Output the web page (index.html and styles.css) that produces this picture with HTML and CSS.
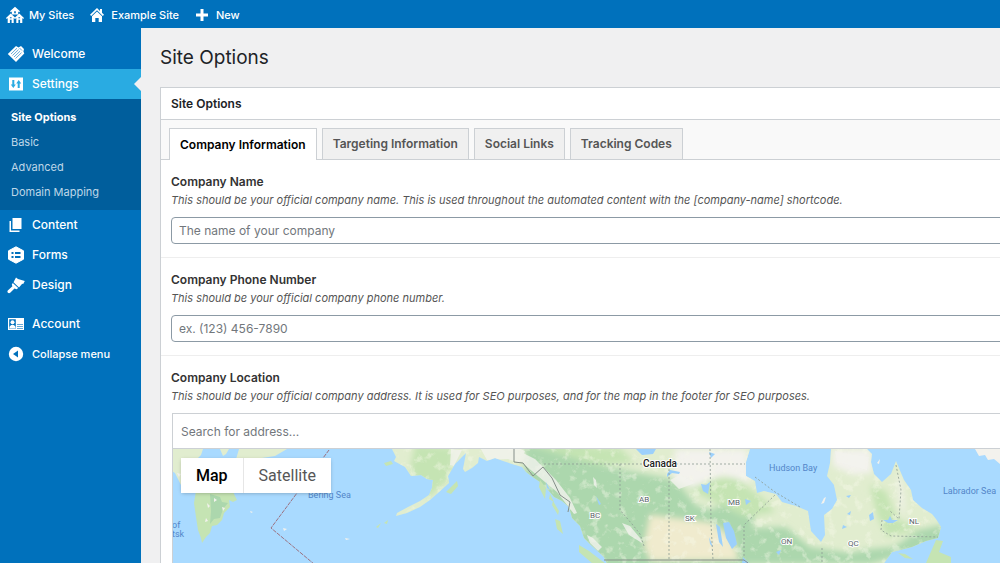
FILE: index.html
```html
<!DOCTYPE html>
<html lang="en">
<head>
<meta charset="utf-8">
<meta name="viewport" content="width=device-width, initial-scale=1">
<title>Site Options</title>
<link rel="stylesheet" href="styles.css">
</head>
<body>
<header class="topbar">
  <a class="topbar-link sites" href="#"><svg class="icon" viewBox="0 0 18 18"><path d="M9 .8 4 5.300l.8.9 1-.8V8.500h6.400V5.400l1 .8.800-.9zM4.700 7.500 0 12l.8.9.9-.8V17h6v-4.900l1.300 1 1.300-1V17h6v-4.900l.9.8.8-.9-4.700-4.500L9 11.500z"/><path class="hole" d="M8.200 5.300h1.600v2H8.200zM3.900 13.700h1.700V17H3.900zm8.500 0h1.700V17h-1.700zM3.900 11.200h1.700v1H3.900zm8.500 0h1.700v1h-1.700z"/></svg>My Sites</a>
  <a class="topbar-link site" href="#"><svg class="icon" viewBox="0 0 18 18"><path d="M9 2 2 8.700l1.200 1.200L9 4.300l5.800 5.600L16 8.700l-2-1.900V3h-2v1.900zM4 10.300l5-4.700 5 4.700V16h-3.300v-4H7.300v4H4z"/></svg>Example Site</a>
  <a class="topbar-link new" href="#"><svg class="icon" viewBox="0 0 18 18"><path d="M7.500 3h3v4.500H15v3h-4.500V15h-3v-4.500H3v-3h4.500z"/></svg>New</a>
</header>
<div class="layout">
  <nav class="sidebar" aria-label="Main menu">
    <a class="menu-link" href="#"><svg class="icon" viewBox="0 0 18 18"><path d="M.8 9 9 1l2.500 1.600L14 1l3 3-.6 2.500.9 2L9 17z"/><path class="cut" d="m4 9 6-5.800M5.500 10.500l6-5.800M7 12l6-5.800M8.500 13.500l6-5.800M12.500 3l2.500 2.500"/></svg>Welcome</a>
    <a class="menu-link current" href="#" aria-current="true"><svg class="icon" viewBox="0 0 18 18"><path d="M2 2.500h14v13H2z"/><path class="cut-current" d="M6.300 5v6m5.400-4v6"/><path class="hole-current" d="m3.800 9.600 2.500 3.500 2.500-3.500zM9.200 8.400l2.500-3.500 2.500 3.500z"/></svg>Settings</a>
    <div class="submenu">
      <a class="submenu-link selected" href="#">Site Options</a>
      <a class="submenu-link" href="#">Basic</a>
      <a class="submenu-link" href="#">Advanced</a>
      <a class="submenu-link" href="#">Domain Mapping</a>
    </div>
    <a class="menu-link" href="#"><svg class="icon" viewBox="0 0 18 18"><path d="M5.500 2h9v11h-9zM2.500 5H4v9.500h8.500V16h-10z"/></svg>Content</a>
    <a class="menu-link" href="#"><svg class="icon" viewBox="0 0 18 18"><path d="m9 .8 7.500 4v8.400L9 17.200l-7.500-4V4.800z" stroke="currentColor" stroke-linejoin="round"/><path class="cut-wide" d="M4.500 7h2m1.500 0h5.500m-9 4h2m1.500 0h5.500"/></svg>Forms</a>
    <a class="menu-link" href="#"><svg class="icon" viewBox="0 0 18 18"><path d="M9 1.500 11 3l6.800 2-1.600 3-1-.2-3.200 3.700L6.500 6.200zM5.800 6.900l5.400 5.200-1.600 1.100-2.100-.8-4.300 4.400c-1.600 1.200-3.700-.6-2.400-2.300l4.600-4.200-.6-1.800z"/></svg>Design</a>
    <div class="menu-gap"></div>
    <a class="menu-link" href="#"><svg class="icon" viewBox="0 0 18 18"><path fill-rule="evenodd" d="M1 3h16v12H1zM2.200 4.200v9.600h6.600V4.200z"/><circle cx="5.500" cy="7.200" r="2"/><path d="M2.300 13.500c0-5 6.400-5 6.400 0z"/><path class="hairline" d="M10 9.500h6m-6 2h6m-6 2h6"/></svg>Account</a>
    <button class="menu-link collapse" type="button"><svg class="icon" viewBox="0 0 18 18"><circle cx="9" cy="9" r="7.200"/><path class="hole" d="M11 5.500v7L6 9z"/></svg>Collapse menu</button>
  </nav>
  <main class="content">
    <h1 class="page-title">Site Options</h1>
    <section class="panel">
      <h2 class="panel-title">Site Options</h2>
      <div class="tabs" role="tablist">
        <button class="tab active" type="button" role="tab" aria-selected="true">Company Information</button>
        <button class="tab" type="button" role="tab" aria-selected="false">Targeting Information</button>
        <button class="tab" type="button" role="tab" aria-selected="false">Social Links</button>
        <button class="tab" type="button" role="tab" aria-selected="false">Tracking Codes</button>
      </div>
      <div class="field">
        <label class="label" for="name">Company Name</label>
        <p class="hint">This should be your official company name. This is used throughout the automated content with the [company-name] shortcode.</p>
        <input class="input" id="name" type="text" placeholder="The name of your company">
      </div>
      <div class="field">
        <label class="label" for="phone">Company Phone Number</label>
        <p class="hint">This should be your official company phone number.</p>
        <input class="input" id="phone" type="tel" placeholder="ex. (123) 456-7890">
      </div>
      <div class="field">
        <label class="label" for="address">Company Location</label>
        <p class="hint">This should be your official company address. It is used for SEO purposes, and for the map in the footer for SEO purposes.</p>
        <div class="location">
          <input class="search" id="address" type="text" placeholder="Search for address...">
          <div class="map">
            <svg class="map-canvas" role="img" aria-label="Map of Canada">
              <defs>
                <path id="mainland" d="M392 449L396 457 394 461 405 467 411 476 421 475 427 479 433 480 432 488 429 495 420 501 408 507 397 513 396 516 407 513 420 507 430 500 439 492 449 483 448 476 455 464 462 457 466 453 463 469 465 472 472 468 478 463 479 457 487 461 495 458 503 461 512 464 522 467 526 472 534 478 540 482 548 490 554 497 562 501 569 507 572 518 580 526 584 538 591 545 604 557 608 566H882L892 552 912 547 926 541 938 538 941 527 936 519 932 514 922 508 913 500 911 490 904 480 896 461 891 474 882 482 874 474 871 462 872 454 867 449H831L830 463 827 476 834 485 837 500 832 509 824 515 825 535 821 542 811 531 808 511 796 506 782 502 776 494 764 491 757 493 755 481 746 476V462L750 449Z"/>
                <clipPath id="land"><use href="#mainland"/></clipPath>
                <filter id="texture" x="0" y="0" width="100%" height="100%">
                  <feTurbulence type="fractalNoise" baseFrequency=".11" numOctaves="4" seed="8"/>
                  <feColorMatrix values="0 0 0 0 .93 0 0 0 0 .95 0 0 0 0 .82 5 0 0 0 -2.700"/>
                </filter>
                <filter id="soft"><feGaussianBlur stdDeviation="3"/></filter>
              </defs>
              <g transform="translate(-173 -449)">
                <path class="plain" d="M172 449h31l-2 6-5 5v25h-15l-6-12-3-2zM220 449h9l-3 5-3 2zM239 449h48l-12 7-13 2v15h-30z"/>
                <path class="grass" d="M197 485h34l3 9 3 6-4 2-4-2 1 7-6 6-2 7-5 5-5 1-2 7-4 4-4 6-1-5-3-8-2-13-2-14z"/>
                <path class="forest" d="M210 494l10 3 2 5 6 1-5 6-3 9-6 1-4 5 1-13z"/>
                <path class="snow" d="M207 503l3 3-2 2zM214 498l3 2-3 2zM206 518l2 3-3 1zM177 473l4 1-2 3zM222 507l3 1-2 3zM283 528l4 1-3 2zM345 538l5 1-4 1zM250 511l3 1-2 1z"/>
                <use href="#mainland" class="plain"/>
                <g clip-path="url(#land)">
                  <g filter="url(#soft)">
                    <path class="grass" d="M415 445l40 3-5 30-22 20-10-17-8-12z"/>
                    <path class="forest" d="M525 445h60l15 20 75 15 22 26 14 4 20-10 24 14-3 14-8 20 2 22H570l-46-73zM744 528l42-1 24 20 40 6 20-4 24-2 25-17 28-6-5 20-72 20H744z"/>
                    <path class="grass" d="M530 445l90 3 15 15-35 2-20-5zM670 480l65-2 30 22 10 12-30 5zM870 485l16 6 11 28 23 10-33 8-10-22z"/>
                    <path class="prairie" d="M650 515l62 8 20 15 7 22-88 1-7-15z"/>
                    <path class="snow" d="M675 449h72l4 34-28-8-30 13-20-8zM832 449h39l1 24-19 2-20-9zM897 475l4 3 3 22 1 20-5-16z"/>
                  </g>
                  <rect class="grain" x="392" y="449" width="560" height="114" filter="url(#texture)"/>
                  <path class="tundra" d="M478 444h30l17 7-5 12-12-4-21 1zM515 449l20 10 21 21 14 18 7 15-3 1-17-22-18-15-21-18zM451 449l11 1-8 16-4-1zM622 523l8 3 10 12 2 5-13-8zM593 477l3 3 1 8-3-3zM587 535l6 3 9 9-4 4-8-8zM670 480l10-5 15 8-16 6zM835 451l13 3 21 3-2 13-11-3-19-5z"/>
                </g>
                <path class="grass" d="M384 463l7-2 2 3-7 2zM449 489l8-8 1 5-7 8-5-2zM540 480l6 8-1 11-6-12zM550 494l4 8-5-3zM553 501l6 10-1 4-6-10zM555 519l5 2 3 13-6-5zM579 545l10 6 17 13h-13l-14-12zM384 523l4-3-1 4zM376 527l5-4-3 5zM936 540l7 1-4 11 12 5v6h-25zM898 553l7 1 8 5-8-1z"/>
                <path class="snow" d="M975 449h25v15l-6-5-6 1-3-5-6 1zM821 504l3-6 2-1-2 6zM877 463l3-4-1 5z"/>
                <path class="lake" d="M636 449h20l-3 5-11 1zM667 474l3-4 10 2-1 2-7-1-5 4zM701 484l5 1 4-3-2 12-5-3zM723 523l6-1 5 9 3 13-5 5-6-11zM716 524l4 3 3 20-4-5zM709 452l6 2-4 4zM869 515l4-3 1 7-4 2zM883 520l5 0 2-4 2 4 6 0-5 3-5 0zM847 514l4-3-1 4zM596 496l5 8-2 1zM843 525l4 2-5 2zM745 499l6 2-5 4zM776 552l5-2-2 5zM743 557l6 6h-7zM546 482l4 8-3-2zM709 537l4 10-3-3zM846 496l5-1-2 3z"/>
                <path class="border" d="M329 450l-58 78 43 36"/>
                <path class="country" d="M514 449v13l9 1 10 13 10-9 9 11 8 17 10 7-2 10M604 560h140l4 3"/>
                <path class="province" d="M544 464h201M620 464v46l12 14 8 10 4 12M669 465v95M710 449l1 75 2 36M744 556v-31l32-31M755 477l20 15 25 15M822 548v14M882 520l-1 10 10 6 47 1M896 465l5 25-2 29-9-8"/>
                <g class="water-label"><text x="308" y="498">Bering Sea</text><text x="769" y="471">Hudson Bay</text><text x="943" y="494">Labrador Sea</text><text x="172" y="528">of</text><text x="172" y="537">tsk</text></g>
                <text class="country-label" x="643" y="467">Canada</text>
                <g class="province-label"><text x="590" y="518">BC</text><text x="639" y="502">AB</text><text x="685" y="521">SK</text><text x="728" y="505">MB</text><text x="781" y="544">ON</text><text x="848" y="546">QC</text><text x="909" y="524">NL</text></g>
              </g>
            </svg>
            <div class="map-types">
              <button class="map-type chosen" type="button">Map</button>
              <button class="map-type" type="button">Satellite</button>
            </div>
          </div>
        </div>
      </div>
    </section>
  </main>
</div>
</body>
</html>
```
FILE: styles.css
```css
* { box-sizing: border-box; }
body {
  display: flex;
  flex-direction: column;
  height: 100vh;
  margin: 0;
  overflow: hidden;
  background: #f0f0f1;
  color: #3c434a;
  font: 12px/18px Inter, sans-serif;
}
h1, h2, p { margin: 0; }
button, input { font: inherit; }
button { cursor: pointer; }
a { color: inherit; text-decoration: none; }
.icon { flex: none; width: 18px; height: 18px; fill: currentColor; }
.icon .hole { fill: #0071bc; }
.icon .hole-current { fill: #29abe2; }
.icon .cut { fill: none; stroke: #0071bc; stroke-width: 1; opacity: .6; }
.icon .cut-wide { fill: none; stroke: #0071bc; stroke-width: 2; }
.icon .cut-current { fill: none; stroke: #29abe2; stroke-width: 2; }
.icon .hairline { fill: none; stroke: #0071bc; stroke-width: 1; opacity: .6; }

.topbar {
  display: flex;
  flex: none;
  gap: 14px;
  height: 28px;
  padding: 1px 6px 0;
  background: #0071bc;
  color: #fff;
  font-size: 11px;
  font-weight: 500;
}
.topbar-link { display: flex; align-items: center; gap: 5px; }
.layout { display: flex; flex: 1; min-height: 0; }
.sidebar {
  flex: none;
  width: 141px;
  padding-top: 11px;
  background: #0071bc;
  color: #fff;
}
.menu-link {
  position: relative;
  display: flex;
  align-items: center;
  gap: 7px;
  width: 100%;
  height: 30px;
  padding: 0 7px;
  border: 0;
  background: none;
  color: #fff;
  font-size: 12px;
  font-weight: 500;
}
.menu-link.current { background: #29abe2; }
.menu-link.current::after {
  position: absolute;
  top: 8px;
  right: 0;
  border: 7px solid transparent;
  border-right-color: #f0f0f1;
  border-left-width: 0;
  content: "";
}
.menu-link.collapse { font-size: 11px; }
.menu-gap { height: 9px; }
.submenu { padding: 6px 0 5px; background: #005e9c; font-size: 11px; }
.submenu-link { display: block; padding: 3px 11px 4px; color: #bfd7e8; }
.submenu-link.selected { color: #fff; font-weight: 700; }

.content { flex: 1; min-width: 0; padding: 16px 0 0 19px; }
.page-title { color: #1d2327; font-size: 19px; font-weight: 400; line-height: 28px; }
.panel {
  margin: 15px -24px 0 0;
  border: 1px solid #ccd0d4;
  background: #fff;
}
.panel-title {
  padding: 7px 10px 6px;
  border-bottom: 1px solid #ccd0d4;
  color: #1d2327;
  font-size: 12px;
  font-weight: 600;
  line-height: 18px;
}
.tabs {
  display: flex;
  gap: 5px;
  padding: 8px 8px 0;
  border-bottom: 1px solid #ccd0d4;
  background: #f9f9f9;
}
.tab {
  height: 31px;
  padding: 0 10px;
  border: 1px solid #ccd0d4;
  border-bottom: 0;
  background: #f0f0f0;
  color: #555;
  font-size: 12px;
  font-weight: 600;
}
.tab.active { height: 32px; margin-bottom: -1px; background: #fff; color: #000; }
.field { padding: 13px 10px; border-bottom: 1px solid #eee; }
.label { display: block; color: #333; font-weight: 600; }
.hint { margin-bottom: 8px; color: #555; font-size: 11px; font-style: italic; }
.input {
  display: block;
  width: 100%;
  height: 27px;
  padding: 0 7px;
  border: 1px solid #8c9aa5;
  border-radius: 4px;
  background: #fff;
}
.input::placeholder, .search::placeholder { color: #72777c; opacity: 1; }
.location { margin-left: 1px; border: 1px solid #ccd0d4; }
.search {
  display: block;
  width: 100%;
  height: 35px;
  padding: 0 8px;
  border: 0;
  border-bottom: 1px solid #ccd0d4;
}
.map { position: relative; height: 350px; background: #a9daff; }
.map-canvas { display: block; width: 100%; height: 100%; }
.map-types {
  position: absolute;
  top: 9px;
  left: 8px;
  display: flex;
  background: #fff;
  box-shadow: 0 1px 4px -1px #0000004d;
}
.map-type {
  height: 35px;
  padding: 0 15px;
  border: 0;
  background: none;
  color: #565656;
  font: 16px Roboto, sans-serif;
}
.map-type + .map-type { border-left: 1px solid #e6e6e6; }
.map-type.chosen { color: #000; font-weight: 500; }
.plain { fill: #e1edcf; }
.grass { fill: #c5e4b3; }
.forest { fill: #acd7ad; }
.prairie { fill: #f0ebce; }
.snow { fill: #f3f2ed; }
.tundra { fill: #f3f2ed; opacity: .8; }
.lake { fill: #9cd0fb; }
.grain { opacity: .4; }
.border, .country, .province { fill: none; stroke-width: 1; }
.border { stroke: #9c7180; stroke-dasharray: 4 1; }
.country { stroke: #858e89; }
.province { stroke: #8d9c93; stroke-dasharray: 2 2; opacity: .8; }
.map-canvas text { font-family: Roboto, sans-serif; paint-order: stroke; }
.water-label { fill: #5386c9; font-size: 9px; }
.country-label { fill: #222; stroke: #fff; stroke-width: 2px; font-size: 10px; font-weight: 500; }
.province-label { fill: #596469; stroke: #fff; stroke-width: 2px; font-size: 8px; }
```
